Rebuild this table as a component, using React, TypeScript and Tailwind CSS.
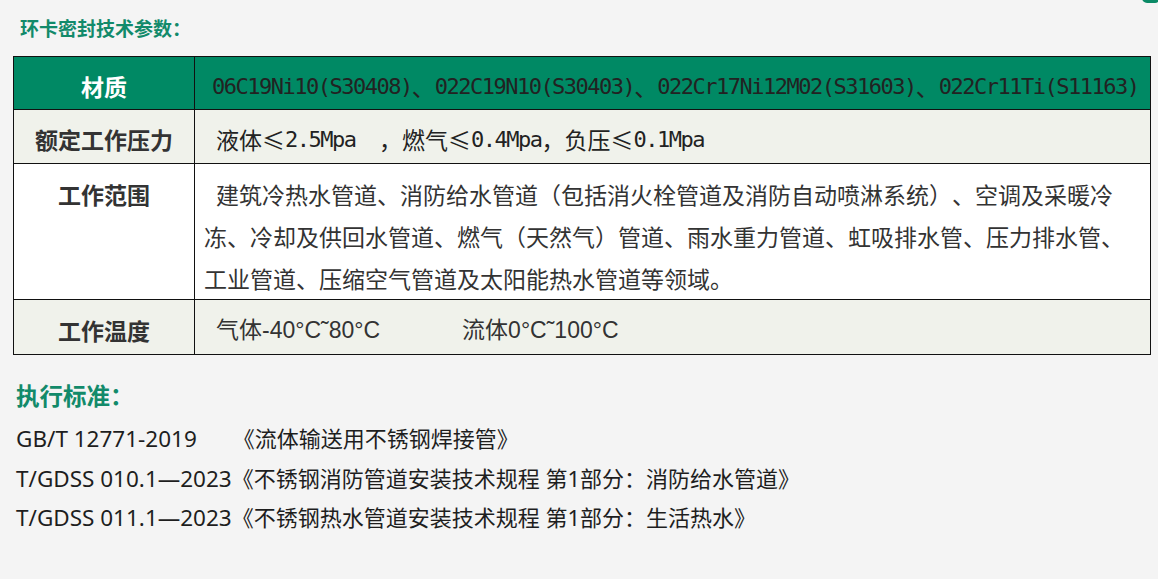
import React from "react";

// ASCII runs get the narrow mono face, everything else stays in the CJK face
function Mixed({ text }: { text: string }) {
  const parts = text.match(/[\x20-\x7e]+|[^\x20-\x7e]+/g) ?? [];
  return (
    <>
      {parts.map((p, i) =>
        /^[\x20-\x7e]/.test(p) ? (
          <span
            key={i}
            className="font-['DejaVu_Sans_Mono',monospace] text-[22px] tracking-[-1.5px] whitespace-pre"
          >
            {p}
          </span>
        ) : (
          <span key={i}>{p}</span>
        )
      )}
    </>
  );
}

const material =
  "06C19Ni10(S30408)、022C19N10(S30403)、022Cr17Ni12M02(S31603)、022Cr11Ti(S11163)";
const pressure = "液体≤2.5Mpa  ，燃气≤0.4Mpa，负压≤0.1Mpa";
const scope =
  "建筑冷热水管道、消防给水管道（包括消火栓管道及消防自动喷淋系统）、空调及采暖冷冻、冷却及供回水管道、燃气（天然气）管道、雨水重力管道、虹吸排水管、压力排水管、工业管道、压缩空气管道及太阳能热水管道等领域。";

const standards = [
  { code: "GB/T 12771-2019", gap: "ml-[36px]", title: "《流体输送用不锈钢焊接管》" },
  { code: "T/GDSS 010.1—2023", gap: "ml-0", title: "《不锈钢消防管道安装技术规程 第1部分：消防给水管道》" },
  { code: "T/GDSS 011.1—2023", gap: "ml-0", title: "《不锈钢热水管道安装技术规程 第1部分：生活热水》" },
];

export default function App() {
  return (
    <div className="relative w-full h-[579px] overflow-hidden bg-[#f4f4f4] font-['Noto_Sans_CJK_SC',sans-serif] [text-spacing-trim:space-all]">
      {/* stray green tip in the top-right corner */}
      <div className="absolute right-[-2px] top-[-7px] w-[18px] h-[10px] rounded-full bg-[#0b8a66]" />

      <div className="pt-[16px] pl-[20px] text-[19px] leading-[24px] font-bold text-[#128a6a]">
        环卡密封技术参数：
      </div>

      <div className="mt-[16px] ml-[13px] w-[1138px] border border-[#111] text-[23px] text-[#2a2a2a]">
        {/* header */}
        <div className="flex h-[53px] bg-[#008964] border-b border-[#111]">
          <div className="w-[181px] shrink-0 border-r border-[#111] flex items-center justify-center pt-[7px] font-bold text-white">
            材质
          </div>
          <div className="flex-1 flex items-center pl-[17px] pt-[7px] whitespace-nowrap text-[#222]">
            <Mixed text={material} />
          </div>
        </div>

        {/* rated pressure */}
        <div className="flex h-[54px] bg-[#f0f2eb] border-b border-[#111]">
          <div className="w-[181px] shrink-0 border-r border-[#111] flex items-center justify-center pt-[6px] font-bold text-[#333]">
            额定工作压力
          </div>
          <div className="flex-1 flex items-center pl-[21px] pt-[6px] whitespace-nowrap text-[#222]">
            <Mixed text={pressure} />
          </div>
        </div>

        {/* scope */}
        <div className="flex h-[136px] bg-white border-b border-[#111]">
          <div className="w-[181px] shrink-0 border-r border-[#111] pt-[9px] leading-[42px] text-center font-bold text-[#333]">
            工作范围
          </div>
          <div className="pl-[9px] pt-[9px]">
            <p className="w-[926px] indent-[12px] leading-[42px] text-[#333]">{scope}</p>
          </div>
        </div>

        {/* temperature */}
        <div className="flex h-[54px] bg-[#f0f2eb]">
          <div className="w-[181px] shrink-0 border-r border-[#111] flex items-center justify-center pt-[6px] font-bold text-[#333]">
            工作温度
          </div>
          <div className="flex-1 flex items-center pl-[21px] pt-[6px] whitespace-nowrap font-['Liberation_Sans','Noto_Sans_CJK_SC',sans-serif] text-[#333]">
            <span>气体-40°C˜80°C</span>
            <span className="ml-[82px]">流体0°C˜100°C</span>
          </div>
        </div>
      </div>

      <div className="mt-[24px] pl-[16px] text-[23.5px] leading-[32px] font-bold text-[#128a6a]">
        执行标准：
      </div>

      <div className="mt-[8px] pl-[16px] font-['Noto_Sans','Noto_Sans_CJK_SC',sans-serif] text-[22px] leading-[39.5px] text-[#1e1e1e]">
        {standards.map((s) => (
          <div key={s.code} className="flex items-center h-[39.5px] whitespace-nowrap">
            <span className="text-[22.5px]">{s.code}</span>
            <span className={s.gap}>{s.title}</span>
          </div>
        ))}
      </div>
    </div>
  );
}
